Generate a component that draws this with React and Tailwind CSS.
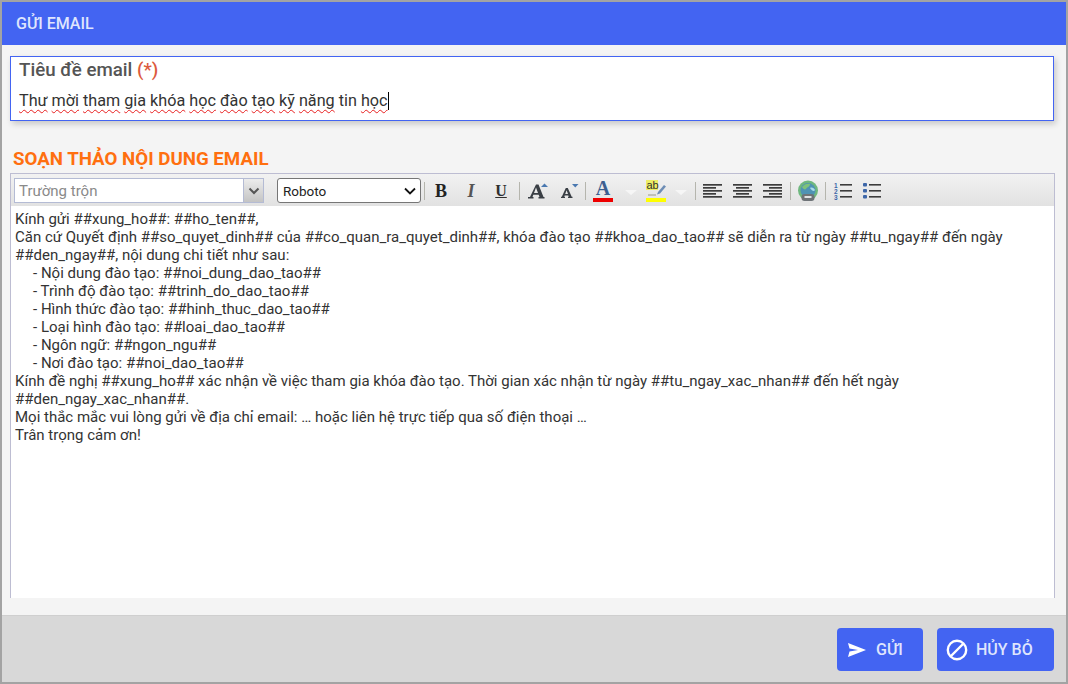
import React from 'react';

const Squiggle = ({ children }) => (
  <span className="underline decoration-wavy decoration-[#e82020] decoration-1 underline-offset-[3px]">{children}</span>
);

const Sep = ({ className }) => <span className={`h-[18px] w-px shrink-0 bg-[#b5b5ad] ${className}`} />;

const Glyph = ({ className, children }) => (
  <span className={`flex h-[20px] w-[30px] shrink-0 items-center justify-center font-['Liberation_Serif',serif] text-[#2f2f2f] ${className}`}>
    {children}
  </span>
);

const SizeIcon = ({ up }) => (
  <svg width="30" height="20" viewBox="0 0 30 20" className="shrink-0">
    {up ? (
      <>
        <path d="M7 17.500h5.500v-1.500H11.500l.8-2.200h5.400l.8 2.200h-1v1.500h6V16h-1L17.500 3.500h-2.500L9 16H7zM13 12l2-5.500L17 12z" fill="#3a3f45" fillRule="evenodd" />
        <path d="M20 6l3.500-3.500L27 6z" fill="#4a78b0" />
      </>
    ) : (
      <>
        <path d="M10 17h4v-1.200h-.8l.5-1.400h3.600l.5 1.400H17V17h4.500v-1.200h-.8L16.800 7h-2l-4 8.800H10zM14.200 13l1.400-3.700L17 13z" fill="#3a3f45" fillRule="evenodd" />
        <path d="M21 3h6.500l-3.250 3.500z" fill="#4a78b0" />
      </>
    )}
  </svg>
);

const AlignIcon = ({ kind, className }) => {
  const rows = {
    left: [[2, 19], [2, 13], [2, 19], [2, 13], [2, 19]],
    center: [[2, 19], [5, 13], [2, 19], [5, 13], [2, 19]],
    right: [[2, 19], [8, 13], [2, 19], [8, 13], [2, 19]],
  }[kind];
  return (
    <svg width="24" height="20" viewBox="0 0 24 20" className={`shrink-0 ${className}`}>
      {rows.map(([x, w], i) => (
        <rect key={i} x={x} y={3 + i * 3} width={w} height="1.700" fill="#3c3c3c" />
      ))}
    </svg>
  );
};

const Caret = ({ className }) => (
  <svg width="16" height="20" viewBox="0 0 16 20" className={`shrink-0 ${className}`}>
    <path d="M2 9h12l-6 5z" fill="#f6f6f6" />
  </svg>
);

const lines = [
  'Kính gửi ##xung_ho##: ##ho_ten##,',
  'Căn cứ Quyết định ##so_quyet_dinh## của ##co_quan_ra_quyet_dinh##, khóa đào tạo ##khoa_dao_tao## sẽ diễn ra từ ngày ##tu_ngay## đến ngày ##den_ngay##, nội dung chi tiết như sau:',
];

const bullets = [
  'Nội dung đào tạo: ##noi_dung_dao_tao##',
  'Trình độ đào tạo: ##trinh_do_dao_tao##',
  'Hình thức đào tạo: ##hinh_thuc_dao_tao##',
  'Loại hình đào tạo: ##loai_dao_tao##',
  'Ngôn ngữ: ##ngon_ngu##',
  'Nơi đào tạo: ##noi_dao_tao##',
];

const closing = [
  'Kính đề nghị ##xung_ho## xác nhận về việc tham gia khóa đào tạo. Thời gian xác nhận từ ngày ##tu_ngay_xac_nhan## đến hết ngày ##den_ngay_xac_nhan##.',
  'Mọi thắc mắc vui lòng gửi về địa chỉ email: … hoặc liên hệ trực tiếp qua số điện thoại …',
  'Trân trọng cảm ơn!',
];

export default function App() {
  return (
    <div className="flex h-[684px] w-[1068px] flex-col overflow-hidden border-2 border-[#a3a3a3] bg-[#f4f4f4] font-['Roboto',sans-serif]">
      <div className="flex h-[43px] shrink-0 items-center bg-[#4364f2] pl-[14px] text-[16px] font-medium text-[#dfe5fd]">
        GỬI EMAIL
      </div>

      <div className="flex min-h-0 flex-1 flex-col pt-[11px] pr-[12px] pl-[8px]">
        <div className="h-[65px] shrink-0 border border-[#4364f2] bg-white pl-[8px] shadow-[2px_3px_6px_rgba(0,0,0,0.18)]">
          <div className="mt-[1px] text-[18.720px] leading-[24px] font-medium text-[#555555]">
            Tiêu đề email <span className="text-[#dc5a3e]">(*)</span>
          </div>
          <div className="mt-[9px] flex items-center text-[16.200px] leading-[20px] text-[#333333]">
            <Squiggle>Thư</Squiggle>&nbsp;<Squiggle>mời</Squiggle>&nbsp;<Squiggle>tham</Squiggle>&nbsp;<Squiggle>gia</Squiggle>&nbsp;<Squiggle>khóa</Squiggle>&nbsp;<Squiggle>học</Squiggle>&nbsp;<Squiggle>đào</Squiggle>&nbsp;<Squiggle>tạo</Squiggle>&nbsp;<Squiggle>kỹ</Squiggle>&nbsp;<Squiggle>năng</Squiggle>&nbsp;tin&nbsp;<Squiggle>học</Squiggle>
            <span className="h-[18px] w-px bg-black" />
          </div>
        </div>

        <div className="mt-[26px] ml-[3px] text-[18.720px] leading-[24px] font-bold whitespace-nowrap text-[#ff6f0f]">
          SOẠN THẢO NỘI DUNG EMAIL
        </div>

        <div className="mt-[2px] mr-[-1px] flex min-h-0 flex-1 flex-col border-x border-[#bdbdd2]">
          <div className="flex h-[33px] shrink-0 items-center border-t border-[#bdbdd2] bg-gradient-to-b from-[#f2f2f2] to-[#e2e2e2] pt-[2px] pl-[3px]">
            <div className="mt-[2px] flex h-[25px] w-[250px] shrink-0 self-start border border-[#b4bbd4] bg-white">
              <span className="flex-1 pl-[4px] text-[15px] leading-[24px] text-[#8a8a8a]">Trường trộn</span>
              <span className="flex w-[20px] items-center justify-center border-l border-[#b4bbd4] bg-gradient-to-b from-[#ececec] to-[#c4c4c4]">
                <svg width="12" height="8" viewBox="0 0 12 8">
                  <path d="M1.500 1.500 6 6l4.500-4.500" fill="none" stroke="#555555" strokeWidth="2" />
                </svg>
              </span>
            </div>
            <div className="mt-[2px] ml-[13px] flex h-[25px] w-[144px] shrink-0 items-center justify-between self-start rounded-[3px] border border-[#767676] bg-white pt-[1px] pr-[4px] pl-[5px] text-[13.500px] text-[#222222]">
              Roboto
              <svg width="12" height="8" viewBox="0 0 12 8">
                <path d="M1 1.500 6 6.500l5-5" fill="none" stroke="#111111" strokeWidth="1.800" />
              </svg>
            </div>
            <Sep className="mr-[1px] ml-[3px]" />
            <Glyph className="text-[18px] font-bold text-[#222222]">B</Glyph>
            <Glyph className="text-[18px] font-bold text-[#555555] italic">I</Glyph>
            <Glyph className="text-[16px] font-bold underline">U</Glyph>
            <Sep className="mr-[1px] ml-[3px]" />
            <SizeIcon up />
            <SizeIcon />
            <Sep className="mr-[1px] ml-[4px]" />
            <span className="ml-[5px] flex h-[22px] w-[22px] shrink-0 flex-col items-center">
              <span className="font-['Liberation_Serif',serif] text-[20px] leading-[17px] font-bold text-[#3d5f90]">A</span>
              <span className="mt-[1px] h-[4px] w-[20px] bg-[#ee0000]" />
            </span>
            <Caret className="ml-[9px]" />
            <span className="ml-[6px] flex h-[22px] w-[22px] shrink-0 flex-col items-center">
              <svg width="22" height="18" viewBox="0 0 22 18">
                <rect x="1" y="0" width="12" height="10" fill="#eeee66" />
                <text x="1.500" y="9" fontSize="11" fill="#33332a" fontFamily="Liberation Sans">ab</text>
                <path d="M13 12 19 5l2 1.500-6 7-3 1z" fill="#6d8db5" />
                <path d="M3 15h8" stroke="#9a9a8a" strokeWidth="1" />
              </svg>
              <span className="h-[4px] w-[20px] bg-[#ffff00]" />
            </span>
            <Caret className="ml-[6px]" />
            <Sep className="ml-[6px]" />
            <AlignIcon kind="left" className="ml-[5px]" />
            <AlignIcon kind="center" className="ml-[6px]" />
            <AlignIcon kind="right" className="ml-[6px]" />
            <Sep className="ml-[5px]" />
            <svg width="22" height="22" viewBox="0 0 22 22" className="ml-[6px] shrink-0">
              <circle cx="11" cy="10.500" r="10" fill="#6fb87e" />
              <circle cx="11" cy="10.500" r="7.500" fill="#4f93b4" />
              <path d="M5 7c2-3 6-4 8-3 0 3-3 3-4 5-1 1-3 0-4-2z" fill="#7fc27a" />
              <path d="M13 8c2-1 4 0 5 2-1 2-3 1-5-2z" fill="#a9dcea" />
              <rect x="4.500" y="14" width="13" height="7" rx="3" fill="#6f7478" />
              <rect x="7.500" y="16" width="7" height="2" fill="#dfe2e4" />
            </svg>
            <Sep className="ml-[6px]" />
            <svg width="22" height="20" viewBox="0 0 22 20" className="ml-[6px] shrink-0">
              <text x="2" y="7" fontSize="6.500" fontWeight="700" fill="#3d66a8" fontFamily="Liberation Sans">1</text>
              <text x="2" y="13" fontSize="6.500" fontWeight="700" fill="#3d66a8" fontFamily="Liberation Sans">2</text>
              <text x="2" y="19" fontSize="6.500" fontWeight="700" fill="#3d66a8" fontFamily="Liberation Sans">3</text>
              <rect x="8" y="3" width="12" height="1.600" fill="#3c3c3c" />
              <rect x="8" y="9" width="12" height="1.600" fill="#3c3c3c" />
              <rect x="8" y="15" width="12" height="1.600" fill="#3c3c3c" />
            </svg>
            <svg width="22" height="20" viewBox="0 0 22 20" className="ml-[7px] shrink-0">
              <rect x="2" y="2" width="4" height="3.500" rx="1" fill="#3d66a8" />
              <rect x="2" y="8" width="4" height="3.500" rx="1" fill="#3d66a8" />
              <rect x="2" y="14" width="4" height="3.500" rx="1" fill="#3d66a8" />
              <rect x="8" y="3" width="12" height="1.600" fill="#3c3c3c" />
              <rect x="8" y="9" width="12" height="1.600" fill="#3c3c3c" />
              <rect x="8" y="15" width="12" height="1.600" fill="#3c3c3c" />
            </svg>
          </div>

          <div className="min-h-0 flex-1 bg-white pt-[4px] pr-[20px] pl-[4px] text-[15px] leading-[18px] text-[#333333]">
            {lines.map((l) => <div key={l}>{l}</div>)}
            {bullets.map((b) => <div key={b} className="pl-[18px]">- {b}</div>)}
            {closing.map((l) => <div key={l}>{l}</div>)}
          </div>
        </div>
      </div>

      <div className="mt-[17px] flex h-[67px] shrink-0 items-start justify-end gap-[14px] border-t border-[#cfcfcf] bg-[#d8d8d8] pt-[12px] pr-[12px]">
        <button className="flex h-[43px] w-[86px] items-center rounded-[4px] bg-[#4364f2] pl-[11px] text-[16px] font-medium text-[#dfe5fd]">
          <svg width="18" height="14" viewBox="0 0 18 14" className="mr-[10px]">
            <path d="M0 0l18 7-18 7 1.500-5.500L10 7 1.500 5.500z" fill="#ffffff" />
          </svg>
          GỬI
        </button>
        <button className="flex h-[43px] w-[117px] items-center rounded-[4px] bg-[#4364f2] pl-[9px] text-[16px] font-medium text-[#dfe5fd]">
          <svg width="22" height="22" viewBox="0 0 22 22" className="mr-[8px]">
            <circle cx="11" cy="11" r="9.200" fill="none" stroke="#ffffff" strokeWidth="2.400" />
            <path d="M5 17 17 5" stroke="#ffffff" strokeWidth="2.400" />
          </svg>
          HỦY BỎ
        </button>
      </div>
    </div>
  );
}
